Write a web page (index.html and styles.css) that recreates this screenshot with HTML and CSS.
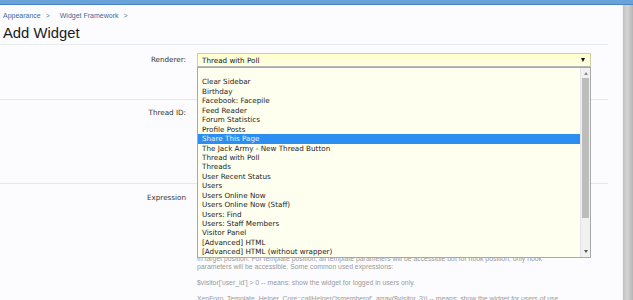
FILE: index.html
```html
<!DOCTYPE html>
<html lang="en">

<head>
    <meta charset="UTF-8">
    <meta name="viewport" content="width=device-width, initial-scale=1.0">
    <title>Add Widget</title>
    <link rel="stylesheet" href="styles.css">
</head>

<body>
    <div class="topbar"></div>
    <div class="window">
        <div class="page">
            <nav class="crumbs">
                <a href="#">Appearance</a> &gt;
                <a href="#">Widget Framework</a> &gt;
            </nav>
            <h1 class="title">Add Widget</h1>

            <form class="form">
                <div class="row row-renderer">
                    <label class="label">Renderer:</label>
                    <div class="ctrl">
                        <div class="select">
                            <span>Thread with Poll</span>
                            <span class="arrow"></span>
                        </div>
                        <div class="dropdown">
                            <ul class="options">
                                <li>&nbsp;</li>
                                <li>Clear Sidebar</li>
                                <li>Birthday</li>
                                <li>Facebook: Facepile</li>
                                <li>Feed Reader</li>
                                <li>Forum Statistics</li>
                                <li>Profile Posts</li>
                                <li class="selected">Share This Page</li>
                                <li>The Jack Army - New Thread Button</li>
                                <li>Thread with Poll</li>
                                <li>Threads</li>
                                <li>User Recent Status</li>
                                <li>Users</li>
                                <li>Users Online Now</li>
                                <li>Users Online Now (Staff)</li>
                                <li>Users: Find</li>
                                <li>Users: Staff Members</li>
                                <li>Visitor Panel</li>
                                <li>[Advanced] HTML</li>
                                <li>[Advanced] HTML (without wrapper)</li>
                            </ul>
                            <div class="scrollbar">
                                <span class="sb-up"></span>
                                <span class="sb-thumb"></span>
                                <span class="sb-down"></span>
                            </div>
                        </div>
                    </div>
                </div>

                <div class="row row-thread">
                    <label class="label">Thread ID:</label>
                    <div class="ctrl">
                        <input type="text" class="textbox">
                    </div>
                </div>

                <div class="row row-expr">
                    <label class="label">Expression</label>
                    <div class="ctrl">
                        <div class="textarea"></div>
                        <p class="hint">In target position. For template position, all template parameters will be accessible but for hook position, only hook<br>parameters will be accessible. Some common used expressions:</p>
                        <p class="hint">$visitor['user_id'] &gt; 0 -- means: show the widget for logged in users only.</p>
                        <p class="hint">XenForo_Template_Helper_Core::callHelper('ismemberof', array($visitor, 3)) -- means: show the widget for users of use</p>
                    </div>
                </div>
            </form>
        </div>
        <div class="strip"></div>
    </div>
</body>

</html>
```

FILE: styles.css
```css
html,
body {
    margin: 0;
    height: 300px;
    overflow: hidden;
}

body {
    font-family: "DejaVu Sans", Verdana, sans-serif;
    background-color: #fcfcfe;
    color: #222;
}

.topbar {
    height: 4px;
    background: #6aa3da;
    border-bottom: 1px solid #4a84c0;
}

.window {
    display: flex;
    height: 295px;
}

.page {
    flex: 1;
    min-width: 0;
    padding-right: 14px;
    background-color: #fcfcfe;
    border-right: 1px solid #f2f2f2;
}

.strip {
    width: 10px;
    flex-shrink: 0;
    background: linear-gradient(to right, #c2c2c2, #d4d4d4 45%, #c0c0c0 80%, #b4b4b4);
}

/* header */

.crumbs {
    margin-top: 6px;
    padding-left: 3px;
    font-family: "Liberation Sans", Arial, sans-serif;
    font-size: 7px;
    line-height: 10px;
    color: #5b7898;
}

.crumbs a {
    color: #3c6a98;
    text-decoration: none;
    margin-right: 3px;
}

.crumbs a + a {
    margin-left: 8px;
}

.title {
    margin: 3px 0 0;
    padding: 0 0 2px 3px;
    font-family: "Liberation Sans", Arial, sans-serif;
    font-weight: normal;
    font-size: 14.8px;
    line-height: 18px;
    color: #1a1a1a;
    border-bottom: 1px solid #e6ebf1;
}

/* form rows */

.row {
    display: flex;
    gap: 11px;
    border-bottom: 1px solid #e4e9ef;
    box-sizing: border-box;
}

.row-renderer {
    height: 55px;
    padding-top: 8px;
}

.row-thread {
    height: 84px;
    padding-top: 6px;
}

.row-expr {
    padding-top: 7px;
    border-bottom: none;
}

.label {
    flex: 0 0 186px;
    text-align: right;
    font-size: 7.2px;
    line-height: 14px;
    color: #333;
}

.ctrl {
    flex: 0 0 394px;
    width: 394px;
    position: relative;
}

.select {
    height: 12px;
    display: flex;
    align-items: center;
    justify-content: space-between;
    padding: 0 5px 0 4px;
    background: linear-gradient(#ffffcc, #ffffe6);
    border: 1px solid #cfcfa6;
    border-bottom-color: #b8b8b8;
    font-size: 7.2px;
    color: #111;
}

.arrow {
    width: 0;
    height: 0;
    border-left: 2.5px solid transparent;
    border-right: 2.5px solid transparent;
    border-top: 4px solid #111;
}

.textbox {
    display: block;
    width: 200px;
    height: 14px;
    margin: 0;
    border: 1px solid #ccc;
    background: #ffffe6;
}

.textarea {
    height: 59px;
    border: 1px solid #ccc;
    background: #ffffe6;
}

.hint {
    margin: 3px 0 8px;
    font-family: "Liberation Sans", Arial, sans-serif;
    font-size: 6.85px;
    line-height: 8px;
    color: #9a9a9a;
    white-space: nowrap;
}

.hint + .hint {
    margin-top: 0;
}

/* open dropdown list */

.dropdown {
    position: absolute;
    top: 14px;
    left: 0;
    width: 392px;
    height: 189px;
    display: flex;
    background: #ffffef;
    border: 1px solid #a8a8a8;
    z-index: 2;
}

.options {
    flex: 1;
    list-style: none;
    margin: 0;
    padding: 0;
    font-size: 7.2px;
    color: #1a1a1a;
}

.options li {
    height: 9.44px;
    line-height: 9.44px;
    padding-left: 4px;
    white-space: nowrap;
}

.options li.selected {
    background: #2c8ef0;
    color: #e6f2ff;
}

.scrollbar {
    position: relative;
    width: 9px;
    background: #f1f1f1;
    border-left: 1px solid #e2e2e2;
}

.sb-up,
.sb-down {
    position: absolute;
    left: 2.5px;
    width: 0;
    height: 0;
    border-left: 2px solid transparent;
    border-right: 2px solid transparent;
}

.sb-up {
    top: 4px;
    border-bottom: 3px solid #8a8a8a;
}

.sb-down {
    bottom: 4px;
    border-top: 3px solid #555;
}

.sb-thumb {
    position: absolute;
    top: 10px;
    left: 1px;
    width: 7px;
    height: 140px;
    background: #bdbdbd;
}
```
